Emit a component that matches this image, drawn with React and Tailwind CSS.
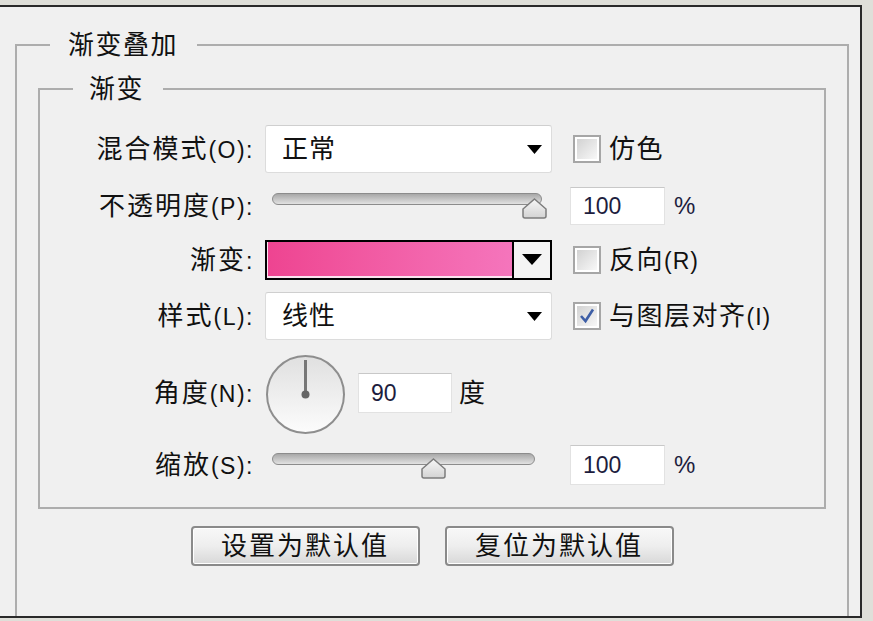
import React from "react";

const font = "font-['Liberation_Sans','Noto_Sans_CJK_SC',sans-serif]";

function Caret({ w = 15, h = 9 }) {
  return (
    <svg width={w} height={h} viewBox={`0 0 ${w} ${h}`}>
      <polygon points={`0,0 ${w},0 ${w / 2},${h}`} fill="#000" />
    </svg>
  );
}

function Label({ cn, en }) {
  return (
    <div className="w-[214px] shrink-0 whitespace-nowrap text-right text-[26px] leading-none tracking-[2px] text-[#111]">
      {cn}
      <span className="text-[23px] tracking-[1.5px]">{en}</span>
    </div>
  );
}

function Select({ value }) {
  return (
    <div className="ml-[11px] flex h-[48px] w-[287px] items-center justify-between rounded-[3px] border border-[#dcdcdc] border-t-[#cfcfcf] bg-white pl-[16px] pr-[9px]">
      <span className="text-[26px] leading-none tracking-[1px] text-[#111]">
        {value}
      </span>
      <Caret />
    </div>
  );
}

function Check({ cn, en, checked }) {
  return (
    <div className="ml-[21px] flex items-center">
      <div className="flex h-[28px] w-[28px] items-center justify-center border-2 border-[#a6a6a6] bg-white">
        <div className="flex h-[20px] w-[20px] items-center justify-center bg-gradient-to-br from-[#d2d2d2] to-[#f8f8f8]">
          {checked && (
            <svg width="18" height="18" viewBox="0 0 18 18">
              <path
                d="M3 9 L7.5 14 L15 2.5"
                fill="none"
                stroke="#3d5ea6"
                strokeWidth="2.6"
              />
            </svg>
          )}
        </div>
      </div>
      <span className="ml-[8px] whitespace-nowrap text-[26px] leading-none tracking-[1.5px] text-[#111]">
        {cn}
        <span className="text-[23px] tracking-[1px]">{en}</span>
      </span>
    </div>
  );
}

function Slider({ trackW, thumbX, trackTop, thumbTop }) {
  return (
    <div className="relative ml-[11px] h-full w-[287px] pl-[7px]">
      <div
        className="h-[12px] rounded-full border border-[#8c8c8c] bg-gradient-to-b from-[#a8a8a8] to-[#e2e2e2]"
        style={{ width: trackW, marginTop: trackTop }}
      />
      <svg
        className="absolute"
        style={{ left: thumbX, top: thumbTop }}
        width="25"
        height="21"
        viewBox="0 0 25 21"
      >
        <defs>
          <linearGradient id="thumb" x1="0" y1="0" x2="0" y2="1">
            <stop offset="0" stopColor="#f7f7f7" />
            <stop offset="1" stopColor="#d3d3d3" />
          </linearGradient>
        </defs>
        <path
          d="M12.5 1 L24 11 L24 18 Q24 20 22 20 L3 20 Q1 20 1 18 L1 11 Z"
          fill="url(#thumb)"
          stroke="#7c7c7c"
          strokeWidth="1.5"
        />
      </svg>
    </div>
  );
}

function NumBox({ value, className = "" }) {
  return (
    <div
      className={`flex items-center border border-[#e2e2e2] border-t-[#c8c8c8] bg-white pl-[12px] text-[23px] leading-none text-[#1d1d3e] ${className}`}
    >
      {value}
    </div>
  );
}

function Dial() {
  return (
    <div className="ml-[12px] mt-[2px] h-[79px] w-[79px] self-start rounded-full border-2 border-[#8e8e8e] bg-gradient-to-b from-[#e0e0e0] to-[#fcfcfc]">
      <svg width="75" height="75" viewBox="0 0 75 75">
        <line x1="37.5" y1="37.5" x2="37.5" y2="3" stroke="#777" strokeWidth="3" />
        <circle cx="37.5" cy="37.5" r="4" fill="#666" />
      </svg>
    </div>
  );
}

function Gradient() {
  return (
    <div className="ml-[11px] flex h-[40px] w-[287px] border-2 border-black">
      <div className="flex-1 border-b-2 border-l border-[#fbe3ef] bg-gradient-to-r from-[#ee4491] to-[#f575bc]" />
      <div className="flex w-[38px] items-center justify-center border-l-2 border-black bg-[#f4f4f4]">
        <Caret w={20} h={11} />
      </div>
    </div>
  );
}

function Button({ children }) {
  return (
    <button className="flex h-[40px] w-[229px] items-center justify-center rounded-[4px] border-2 border-[#8a8a8a] bg-gradient-to-b from-[#f8f8f8] via-[#eeeeee] to-[#d8d8d8] text-[26px] leading-none tracking-[2px] text-[#111] shadow-[inset_0_0_0_1px_#ffffff]">
      {children}
    </button>
  );
}

export default function App() {
  return (
    <div className={`h-[621px] w-[873px] overflow-hidden bg-[#dfdfd9] pt-[5px] ${font}`}>
      <div className="h-[613px] w-[862px] overflow-hidden border-y-2 border-r-2 border-[#2a2a2a] bg-[#f0f0f0]">
        {/* 渐变叠加 */}
        <fieldset className="ml-[15px] mt-[21px] h-[640px] w-[834px] border-2 border-[#adadad]">
          <legend className="ml-[33px] h-[34px] pl-[18px] pr-[19px] text-[26px] leading-[34px] tracking-[1.5px] text-[#111]">
            渐变叠加
          </legend>

          {/* 渐变 */}
          <fieldset className="ml-[21px] mt-[10px] w-[788px] border-2 border-[#adadad] pb-[22px]">
            <legend className="ml-[33px] h-[34px] pl-[16px] pr-[19px] text-[26px] leading-[34px] tracking-[1.5px] text-[#111]">
              渐变
            </legend>

            <div className="mt-[19px] flex h-[48px] items-center">
              <Label cn="混合模式" en="(O):" />
              <Select value="正常" />
              <Check cn="仿色" />
            </div>

            <div className="mt-[14px] flex h-[38px] items-center">
              <Label cn="不透明度" en="(P):" />
              <Slider trackW={270} thumbX={257} trackTop={6} thumbTop={11} />
              <NumBox value="100" className="ml-[18px] h-[38px] w-[95px]" />
              <span className="ml-[9px] text-[24px] leading-none text-[#1d1d3e]">%</span>
            </div>

            <div className="mt-[15px] flex h-[39px] items-center">
              <Label cn="渐变" en=":" />
              <Gradient />
              <Check cn="反向" en="(R)" />
            </div>

            <div className="mt-[13px] flex h-[48px] items-center">
              <Label cn="样式" en="(L):" />
              <Select value="线性" />
              <Check cn="与图层对齐" en="(I)" checked />
            </div>

            <div className="mt-[13px] flex h-[80px] items-center">
              <Label cn="角度" en="(N):" />
              <Dial />
              <NumBox value="90" className="ml-[13px] h-[40px] w-[94px]" />
              <span className="ml-[7px] text-[26px] leading-none text-[#111]">度</span>
            </div>

            <div className="mt-[12px] flex h-[40px] items-center">
              <Label cn="缩放" en="(S):" />
              <Slider trackW={263} thumbX={156} trackTop={8} thumbTop={13} />
              <NumBox value="100" className="ml-[18px] h-[40px] w-[95px]" />
              <span className="ml-[9px] text-[24px] leading-none text-[#1d1d3e]">%</span>
            </div>
          </fieldset>

          <div className="mt-[17px] flex justify-center gap-[25px]">
            <Button>设置为默认值</Button>
            <Button>复位为默认值</Button>
          </div>
        </fieldset>
      </div>
    </div>
  );
}
